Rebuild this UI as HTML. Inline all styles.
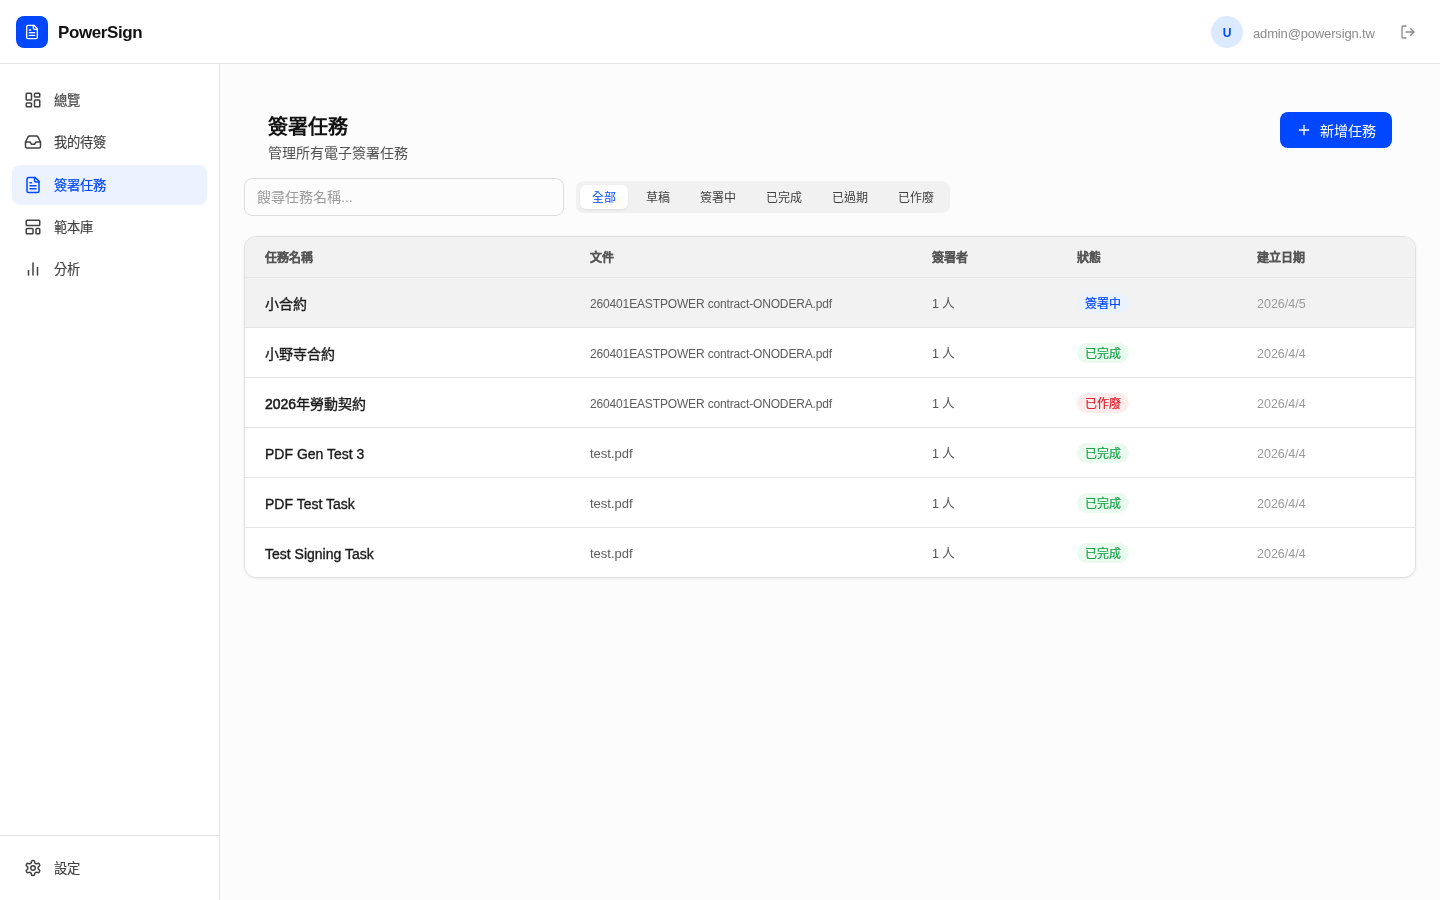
<!DOCTYPE html>
<html lang="zh-TW">
<head>
<meta charset="utf-8">
<title>PowerSign</title>
<style>
*{box-sizing:border-box;margin:0;padding:0}
html,body{width:1440px;height:900px;overflow:hidden}
body{font-family:"Liberation Sans",sans-serif;background:#fcfcfc;color:#171717;position:relative}
svg{display:block}
.app{position:absolute;left:0;top:0;width:1440px;height:900px;will-change:transform}
.hdr{position:absolute;left:0;top:0;width:1440px;height:64px;background:#fff;border-bottom:1px solid #e5e5e5}
.logo{position:absolute;left:16px;top:16px;width:32px;height:32px;border-radius:8px;background:#0047ff}
.logo svg{position:absolute;left:8px;top:8px}
.brand{position:absolute;left:58px;top:22px;font-size:17px;font-weight:700;line-height:22px;color:#111;letter-spacing:-0.4px}
.avatar{position:absolute;left:1211px;top:16px;width:32px;height:32px;border-radius:50%;background:#dbeafe;color:#0047ff;font-size:12px;font-weight:700;text-align:center;line-height:34px}
.email{position:absolute;left:1253px;top:25px;font-size:13px;line-height:18px;color:#8a8a8a;letter-spacing:-0.15px}
.logout{position:absolute;left:1400px;top:24px}
.side{position:absolute;left:0;top:64px;width:220px;height:836px;background:#fff;border-right:1px solid #e5e5e5}
.nav{position:absolute;left:12px;width:195px;height:40px;border-radius:8px;font-size:13.3px;color:#404040}
.nav svg{position:absolute;left:12px;top:11px}
.nav span{position:absolute;left:42px;top:12px;line-height:18px;-webkit-text-stroke:0.15px #404040}
.nav.act{background:#edf3fe;color:#0047ff;font-weight:500}
.nav.act span{-webkit-text-stroke:0.2px #0047ff}
.sfoot{position:absolute;left:0;top:771px;width:219px;border-top:1px solid #e5e5e5}
.title{position:absolute;left:268px;top:113px;font-size:20px;font-weight:700;line-height:28px;color:#111}
.sub{position:absolute;left:268px;top:144px;font-size:14px;line-height:18px;color:#525252}
.btn{position:absolute;left:1280px;top:112px;width:112px;height:36px;border-radius:8px;background:#0047ff;color:#fff;font-size:14px;font-weight:500}
.btn svg{position:absolute;left:16px;top:10px}
.btn span{position:absolute;left:40px;top:10px;line-height:18px}
.search{position:absolute;left:244px;top:178px;width:320px;height:38px;border:1px solid #dcdcdc;border-radius:8px;background:transparent}
.search span{position:absolute;left:12px;top:9px;font-size:14px;line-height:18px;color:#9a9a9a}
.tabs{position:absolute;left:576px;top:181px;width:374px;height:32px;border-radius:8px;background:#f1f1f1}
.tab{position:absolute;top:4px;height:24px;font-size:12px;line-height:27px;font-weight:500;color:#404040;text-align:center;border-radius:6px}
.tab.act{background:#fff;color:#0047ff;font-weight:500;box-shadow:0 1px 2px rgba(0,0,0,.08)}
.table{position:absolute;left:244px;top:236px;width:1172px;height:342px;border:1px solid #e0e0e0;border-radius:12px;background:#fff;overflow:hidden;box-shadow:0 1px 3px rgba(0,0,0,.06)}
.row{position:absolute;left:0;width:1170px;height:50px;border-bottom:1px solid #e5e5e5}
.row.th{top:0;height:41px;background:#f2f2f2}
.row.hov{background:#f2f2f2}
.c{position:absolute;white-space:nowrap}
.th .c{top:13px;font-size:12px;font-weight:700;line-height:16px;color:#555;-webkit-text-stroke:0.2px #555}
.row .n{left:20px;top:17px;font-size:14px;font-weight:500;line-height:18px;color:#1a1a1a;-webkit-text-stroke:0.35px #1a1a1a}
.lt{-webkit-text-stroke:0.55px #1a1a1a}
.row .f{left:345px;top:17px;font-size:13px;line-height:18px;color:#5c5c5c}
.row .f.l{font-size:12px;letter-spacing:-0.15px;top:18px;line-height:16px}
.row .s{left:687px;top:17px;font-size:12.5px;line-height:18px;color:#555;letter-spacing:-0.3px}
.row .d{left:1012px;top:17px;font-size:12.5px;line-height:18px;color:#9a9a9a}
.badge{position:absolute;left:832px;top:15px;height:20px;padding:0 8px;border-radius:10px;font-size:12px;line-height:22px;font-weight:500;-webkit-text-stroke:0.2px currentColor}
.b-blue{background:#eaf2ff;color:#0047ff}
.b-green{background:#eafaef;color:#16a34a}
.b-red{background:#fdecec;color:#e0202a}
</style>
</head>
<body>
<div class="app">
<div class="hdr">
  <div class="logo"><svg width="16" height="16" viewBox="0 0 24 24" fill="none" stroke="#fff" stroke-width="2" stroke-linecap="round" stroke-linejoin="round"><path d="M15 2H6a2 2 0 0 0-2 2v16a2 2 0 0 0 2 2h12a2 2 0 0 0 2-2V7Z"/><path d="M14 2v4a2 2 0 0 0 2 2h4"/><path d="M10 9H8"/><path d="M16 13H8"/><path d="M16 17H8"/></svg></div>
  <div class="brand">PowerSign</div>
  <div class="avatar">U</div>
  <div class="email">admin@powersign.tw</div>
  <svg class="logout" width="16" height="16" viewBox="0 0 24 24" fill="none" stroke="#8a8a8a" stroke-width="2" stroke-linecap="round" stroke-linejoin="round"><path d="M9 21H5a2 2 0 0 1-2-2V5a2 2 0 0 1 2-2h4"/><polyline points="16 17 21 12 16 7"/><line x1="21" x2="9" y1="12" y2="12"/></svg>
</div>

<div class="side">
  <div class="nav" style="top:16px"><svg width="18" height="18" viewBox="0 0 24 24" fill="none" stroke="currentColor" stroke-width="2" stroke-linecap="round" stroke-linejoin="round"><rect width="7" height="9" x="3" y="3" rx="1"/><rect width="7" height="5" x="14" y="3" rx="1"/><rect width="7" height="9" x="14" y="12" rx="1"/><rect width="7" height="5" x="3" y="16" rx="1"/></svg><span>總覽</span></div>
  <div class="nav" style="top:58px"><svg width="18" height="18" viewBox="0 0 24 24" fill="none" stroke="currentColor" stroke-width="2" stroke-linecap="round" stroke-linejoin="round"><polyline points="22 12 16 12 14 15 10 15 8 12 2 12"/><path d="M5.45 5.11 2 12v6a2 2 0 0 0 2 2h16a2 2 0 0 0 2-2v-6l-3.45-6.89A2 2 0 0 0 16.76 4H7.24a2 2 0 0 0-1.79 1.11z"/></svg><span>我的待簽</span></div>
  <div class="nav act" style="top:101px"><svg width="18" height="18" viewBox="0 0 24 24" fill="none" stroke="currentColor" stroke-width="2" stroke-linecap="round" stroke-linejoin="round"><path d="M15 2H6a2 2 0 0 0-2 2v16a2 2 0 0 0 2 2h12a2 2 0 0 0 2-2V7Z"/><path d="M14 2v4a2 2 0 0 0 2 2h4"/><path d="M10 9H8"/><path d="M16 13H8"/><path d="M16 17H8"/></svg><span>簽署任務</span></div>
  <div class="nav" style="top:143px"><svg width="18" height="18" viewBox="0 0 24 24" fill="none" stroke="currentColor" stroke-width="2" stroke-linecap="round" stroke-linejoin="round"><rect width="18" height="7" x="3" y="3" rx="1"/><rect width="9" height="7" x="3" y="14" rx="1"/><rect width="5" height="7" x="16" y="14" rx="1"/></svg><span>範本庫</span></div>
  <div class="nav" style="top:185px"><svg width="18" height="18" viewBox="0 0 24 24" fill="none" stroke="currentColor" stroke-width="2" stroke-linecap="round" stroke-linejoin="round"><line x1="18" x2="18" y1="20" y2="10"/><line x1="12" x2="12" y1="20" y2="4"/><line x1="6" x2="6" y1="20" y2="14"/></svg><span>分析</span></div>
  <div class="sfoot">
    <div class="nav" style="top:12px"><svg width="18" height="18" viewBox="0 0 24 24" fill="none" stroke="currentColor" stroke-width="2" stroke-linecap="round" stroke-linejoin="round"><path d="M12.22 2h-.44a2 2 0 0 0-2 2v.18a2 2 0 0 1-1 1.73l-.43.25a2 2 0 0 1-2 0l-.15-.08a2 2 0 0 0-2.73.73l-.22.38a2 2 0 0 0 .73 2.73l.15.1a2 2 0 0 1 1 1.72v.51a2 2 0 0 1-1 1.74l-.15.09a2 2 0 0 0-.73 2.73l.22.38a2 2 0 0 0 2.73.73l.15-.08a2 2 0 0 1 2 0l.43.25a2 2 0 0 1 1 1.73V20a2 2 0 0 0 2 2h.44a2 2 0 0 0 2-2v-.18a2 2 0 0 1 1-1.73l.43-.25a2 2 0 0 1 2 0l.15.08a2 2 0 0 0 2.73-.73l.22-.39a2 2 0 0 0-.73-2.73l-.15-.08a2 2 0 0 1-1-1.74v-.5a2 2 0 0 1 1-1.74l.15-.09a2 2 0 0 0 .73-2.73l-.22-.38a2 2 0 0 0-2.73-.73l-.15.08a2 2 0 0 1-2 0l-.43-.25a2 2 0 0 1-1-1.73V4a2 2 0 0 0-2-2z"/><circle cx="12" cy="12" r="3"/></svg><span>設定</span></div>
  </div>
</div>

<div class="title">簽署任務</div>
<div class="sub">管理所有電子簽署任務</div>
<div class="btn"><svg width="16" height="16" viewBox="0 0 24 24" fill="none" stroke="#fff" stroke-width="2" stroke-linecap="round" stroke-linejoin="round"><path d="M5 12h14"/><path d="M12 5v14"/></svg><span>新增任務</span></div>

<div class="search"><span>餿尋任務名稱...</span></div>
<div class="tabs">
  <div class="tab act" style="left:4px;width:48px">全部</div>
  <div class="tab" style="left:58px;width:48px">草稿</div>
  <div class="tab" style="left:112px;width:60px">簽署中</div>
  <div class="tab" style="left:178px;width:60px">已完成</div>
  <div class="tab" style="left:244px;width:60px">已過期</div>
  <div class="tab" style="left:310px;width:60px">已作廢</div>
</div>

<div class="table">
  <div class="row th"><div class="c" style="left:20px">任務名稱</div><div class="c" style="left:345px">文件</div><div class="c" style="left:687px">簽署者</div><div class="c" style="left:832px">狀態</div><div class="c" style="left:1012px">建立日期</div></div>
  <div class="row hov" style="top:41px"><div class="c n">小合約</div><div class="c f l">260401EASTPOWER contract-ONODERA.pdf</div><div class="c s">1 人</div><div class="badge b-blue">簽署中</div><div class="c d">2026/4/5</div></div>
  <div class="row" style="top:91px"><div class="c n">小野寺合約</div><div class="c f l">260401EASTPOWER contract-ONODERA.pdf</div><div class="c s">1 人</div><div class="badge b-green">已完成</div><div class="c d">2026/4/4</div></div>
  <div class="row" style="top:141px"><div class="c n"><span class="lt">2026</span>年勞動契約</div><div class="c f l">260401EASTPOWER contract-ONODERA.pdf</div><div class="c s">1 人</div><div class="badge b-red">已作廢</div><div class="c d">2026/4/4</div></div>
  <div class="row" style="top:191px"><div class="c n lt">PDF Gen Test 3</div><div class="c f">test.pdf</div><div class="c s">1 人</div><div class="badge b-green">已完成</div><div class="c d">2026/4/4</div></div>
  <div class="row" style="top:241px"><div class="c n lt">PDF Test Task</div><div class="c f">test.pdf</div><div class="c s">1 人</div><div class="badge b-green">已完成</div><div class="c d">2026/4/4</div></div>
  <div class="row" style="top:291px;border-bottom:none"><div class="c n lt">Test Signing Task</div><div class="c f">test.pdf</div><div class="c s">1 人</div><div class="badge b-green">已完成</div><div class="c d">2026/4/4</div></div>
</div>
</div>
</body>
</html>
